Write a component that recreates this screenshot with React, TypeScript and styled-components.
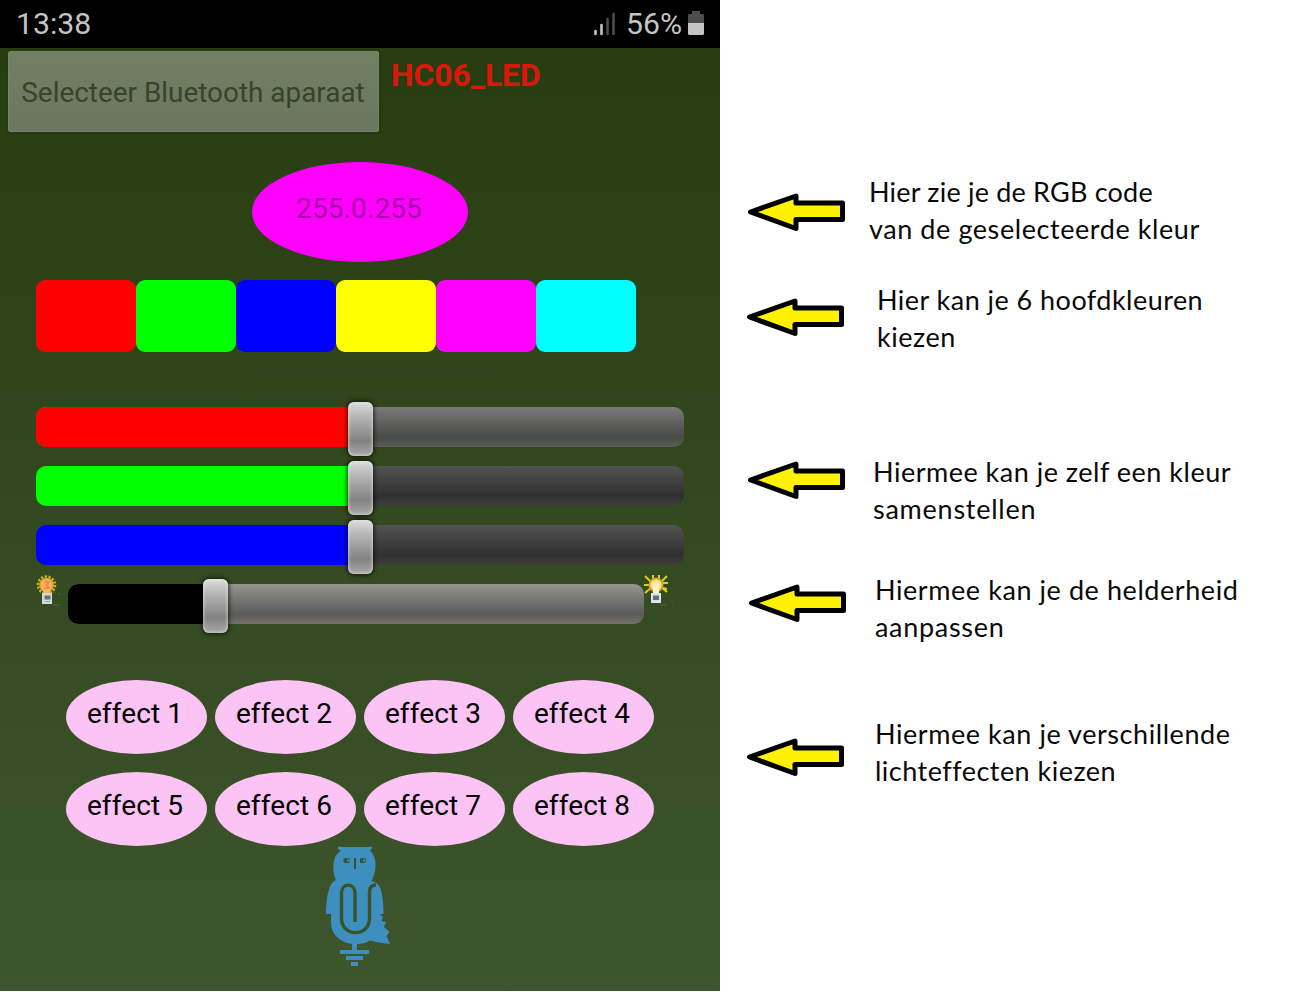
import React from "react";
import styled, { createGlobalStyle } from "styled-components";

const GlobalStyle = createGlobalStyle`
  * { box-sizing: border-box; }
  body { margin: 0; background: #fff; }
`;

const Page = styled.div`
  display: flex;
  width: 1290px;
  height: 992px;
  overflow: hidden;
  background: #fff;
`;

const Phone = styled.main`
  display: flex;
  flex-direction: column;
  width: 720px;
  height: 991px;
  background: linear-gradient(#283c11 48px, #3e562d 991px);
  font-family: Roboto, sans-serif;
  font-size: 28px;
`;

const StatusBar = styled.div`
  display: flex;
  align-items: center;
  height: 48px;
  padding: 0 16px;
  background: #000;
  color: #c4c4c4;
  font-size: 30.2px;
  line-height: 48px;
`;

const Clock = styled.span`
  flex: 1;
`;

const Signal = styled.svg`
  width: 24px;
  height: 24px;
  margin-right: 10px;
`;

const Battery = styled.svg`
  width: 16px;
  height: 24px;
  margin: -2px 0 0 6px;
`;

const Header = styled.div`
  display: flex;
  align-items: flex-start;
  height: 84px;
  padding: 3px 8px 0;
`;

const SelectButton = styled.button`
  width: 371px;
  height: 81px;
  padding: 2px 1px 0 0;
  border: 1px solid #76856a;
  border-radius: 2px;
  background: linear-gradient(#717f63, #69785d);
  box-shadow: 0 1px 2px rgba(20, 30, 10, 0.5);
  color: #37432b;
  font: 27.9px/78px Roboto, sans-serif;
  white-space: nowrap;
`;

const DeviceName = styled.strong`
  margin: 5px 0 0 12px;
  color: #d9180b;
  font-size: 31.8px;
  line-height: 38px;
`;

const ColorPreview = styled.div`
  width: 216px;
  height: 100px;
  margin: 30px 0 0 252px;
  padding: 30px 2px 0 0;
  border-radius: 50%;
  background: #f0f;
  color: #a500a5;
  line-height: 33px;
  text-align: center;
  letter-spacing: 0.1px;
`;

const Swatches = styled.div`
  display: flex;
  margin: 18px 0 0 36px;
`;

const Swatch = styled.button<{ $color: string }>`
  width: 100px;
  height: 72px;
  border: 0;
  border-radius: 9px;
  background: ${(p) => p.$color};
`;

const Sliders = styled.div`
  display: flex;
  flex-direction: column;
  gap: 19px;
  margin: 55px 36px 0;
`;

const tones = {
  light: "linear-gradient(#7a7a7a, #484a46 75%, #5a5c57)",
  dark: "linear-gradient(#525252, #303030 75%, #3d3f3b)",
  warm: "linear-gradient(#96958f, #5a5a58 75%, #73726b)",
};

const Track = styled.div<{ $tone: keyof typeof tones; $width: number }>`
  position: relative;
  width: ${(p) => p.$width}px;
  height: 40px;
  border-radius: 10px;
  background: ${(p) => tones[p.$tone]};
`;

const Fill = styled.div<{ $color: string }>`
  height: 40px;
  border-radius: 10px 0 0 10px;
  background: ${(p) => p.$color};
`;

const Thumb = styled.div`
  position: absolute;
  top: -5px;
  width: 25px;
  height: 54px;
  margin-left: -12px;
  border-radius: 6px;
  background: linear-gradient(#dedede, #b8b8b8 25%, #828282 72%, #a8a8a8);
  box-shadow: inset 0 0 3px 1px rgba(230, 230, 230, 0.6), 0 0 4px 1px rgba(0, 0, 0, 0.7);
`;

const BrightnessRow = styled.div`
  display: flex;
  align-items: flex-start;
  height: 40px;
`;

const Bulb = styled.svg`
  width: 32px;
  height: 32px;
  margin-top: -10px;
`;

const Effects = styled.div`
  display: grid;
  grid-template-columns: repeat(4, 141px);
  gap: 18px 8px;
  margin: 56px 0 0 66px;
`;

const Effect = styled.button`
  height: 74px;
  padding: 0 3px 8px 0;
  border: 0;
  border-radius: 50%;
  background: #fcc3f5;
  color: #000;
  font: 28px/33px Roboto, sans-serif;
  letter-spacing: 0.1px;
  white-space: nowrap;
`;

const Owl = styled.svg`
  width: 68px;
  height: 122px;
  margin: 0 0 0 324px;
`;

const Notes = styled.aside`
  display: flex;
  flex-direction: column;
  width: 570px;
  padding-top: 173px;
`;

const Note = styled.section<{ $indent: number; $after: number }>`
  display: flex;
  align-items: flex-start;
  height: 74px;
  margin-bottom: ${(p) => p.$after}px;
  padding-left: ${(p) => p.$indent}px;
`;

const Arrow = styled.svg<{ $top: number }>`
  flex: none;
  width: 98px;
  height: 40px;
  margin-top: ${(p) => p.$top}px;
`;

const NoteText = styled.p<{ $gap: number }>`
  margin: 0 0 0 ${(p) => p.$gap}px;
  color: #0a0a0a;
  font-family: Lato, sans-serif;
  font-size: 27px;
  line-height: 37px;
  white-space: nowrap;
`;

const Line = styled.span<{ $tracking: number }>`
  display: block;
  letter-spacing: ${(p) => p.$tracking}px;
`;

const colors = ["#f00", "#0f0", "#00f", "#ff0", "#f0f", "#0ff"];

const channels: { color: string; tone: keyof typeof tones }[] = [
  { color: "#f00", tone: "light" },
  { color: "#0f0", tone: "dark" },
  { color: "#00f", tone: "dark" },
];

const notes = [
  { indent: 28, top: 19, gap: 23, after: 34, lines: [["Hier zie je de RGB code", 0.2], ["van de geselecteerde kleur", 0.58]] },
  { indent: 27, top: 16, gap: 32, after: 98, lines: [["Hier kan je 6 hoofdkleuren", 0.46], ["kiezen", 0.5]] },
  { indent: 28, top: 7, gap: 27, after: 44, lines: [["Hiermee kan je zelf een kleur", 0.5], ["samenstellen", 0.75]] },
  { indent: 29, top: 12, gap: 28, after: 70, lines: [["Hiermee kan je de helderheid", 0.57], ["aanpassen", 0.7]] },
  { indent: 27, top: 22, gap: 30, after: 0, lines: [["Hiermee kan je verschillende", 0.56], ["lichteffecten kiezen", 0.48]] },
] as const;

function Slider({ color, tone, width, value }: { color: string; tone: keyof typeof tones; width: number; value: number }) {
  return (
    <Track $tone={tone} $width={width}>
      <Fill $color={color} style={{ width: value }} />
      <Thumb style={{ left: value }} />
    </Track>
  );
}

function DimBulb() {
  return (
    <Bulb viewBox="0 0 32 32">
      <circle cx="10.500" cy="11" r="8.500" fill="none" stroke="#cdb21c" strokeWidth="2.600" strokeDasharray="2.200 1.600" />
      <circle cx="10.500" cy="11" r="7.300" fill="#dba529" />
      <circle cx="10.500" cy="11" r="5.800" fill="#f9b060" />
      <path d="M8 8h5l-2.500 3 2.500 3H8" fill="none" stroke="#ee8a42" strokeWidth="1.600" />
      <path d="M7 15h7v5H7z" fill="#f7b267" />
      <rect x="6" y="19" width="10" height="11" fill="#d3dad6" />
      <path d="M8.500 21.500h6v4h-6z" fill="#67747b" />
      <path d="M9 27.500h5" stroke="#9aa5aa" />
      <path d="M18 19h2M22 20h2M17 31h7" stroke="#466c2f" />
    </Bulb>
  );
}

function BrightBulb() {
  return (
    <Bulb viewBox="0 0 32 32">
      <path d="M9 1v5M15 1v5M1 2l7 7M23 2l-7 7M0 11h6M18 9h6M1 19l7-6M23 18l-6-5M19 14l4 1" stroke="#d8cf20" strokeWidth="2" />
      <circle cx="12" cy="11" r="7.500" fill="#d79d22" />
      <circle cx="12" cy="11" r="5.800" fill="#ffe08a" />
      <path d="M9 9h6v10H9z" fill="#fff3c4" />
      <rect x="7" y="19" width="10" height="10" fill="#dce5e5" />
      <path d="M9 21.500h6v4.500H9z" fill="#5d7180" />
      <path d="M16 31h7M27 28h2" stroke="#456640" />
    </Bulb>
  );
}

export default function App() {
  return (
    <Page>
      <GlobalStyle />
      <Phone>
        <StatusBar>
          <Clock>13:38</Clock>
          <Signal viewBox="0 0 24 24">
            <path d="M3.500 19v3M9.500 13v9" stroke="#c4c4c4" strokeWidth="2.600" strokeLinecap="round" />
            <path d="M15.500 7v15M21.500 2v20" stroke="#4d4d4d" strokeWidth="2.600" strokeLinecap="round" />
          </Signal>
          <span>56%</span>
          <Battery viewBox="0 0 16 24">
            <path d="M4 0h8v3h3l1 1v8H0V4l1-1h3z" fill="#4d4d4d" />
            <path d="M0 12h16v11l-1 1H1l-1-1z" fill="#c4c4c4" />
          </Battery>
        </StatusBar>
        <Header>
          <SelectButton>Selecteer Bluetooth aparaat</SelectButton>
          <DeviceName>HC06_LED</DeviceName>
        </Header>
        <ColorPreview>255.0.255</ColorPreview>
        <Swatches>
          {colors.map((c) => (
            <Swatch key={c} $color={c} />
          ))}
        </Swatches>
        <Sliders>
          {channels.map((c) => (
            <Slider key={c.color} color={c.color} tone={c.tone} width={648} value={324} />
          ))}
          <BrightnessRow>
            <DimBulb />
            <Slider color="#000" tone="warm" width={576} value={147} />
            <BrightBulb />
          </BrightnessRow>
        </Sliders>
        <Effects>
          {[1, 2, 3, 4, 5, 6, 7, 8].map((n) => (
            <Effect key={n}>effect {n}</Effect>
          ))}
        </Effects>
        <Owl viewBox="14 11 68 122">
          <path
            d="M28 11.500L32 12H58L62 11.500V13L60 15.500C64 19 66 25 65.500 32C65 38 63.500 42 61.500 46C67 47.500 70.500 51 71.500 57C73 64 73.500 71 73.500 79H69.500L73 82L71.500 86L76 87L74 92L79.500 97L76.500 101L80 109C72 108 65 107 60 105.500C56 108 52 109 47 109V115H59V119H30V115H42V109C29 107 21 99 21 87V79H16C16 70 17 60 19.500 53C21 49 23 46 26 45C24 41 23 36 23.500 30C23.500 24 26 19 31 15.500L28 14ZM36 121H53V125H36ZM41 127H48V131H41Z"
            fill="#3d8fc0"
          />
          <path d="M45 87V58C45 47.500 31.500 47.500 31.500 58V83C31.500 102.500 59.500 102.500 59.500 83V57C59.500 52 62 50 66 50" fill="none" stroke="#3a5227" strokeWidth="3.400" />
          <path d="M39.500 23.500C35 22 32.500 24 33.500 26.500C34.500 28.500 37 28 39.500 28ZM50 23.500C54.500 22 57 24 56 26.500C55 28.500 52.500 28 50 28Z" fill="#3a5227" />
          <circle cx="38" cy="25.500" r="1.300" fill="#3d8fc0" />
          <circle cx="54" cy="25.500" r="1.300" fill="#3d8fc0" />
          <path d="M45 23V34" stroke="#3a5227" strokeWidth="2" />
        </Owl>
      </Phone>
      <Notes>
        {notes.map((n, i) => (
          <Note key={i} $indent={n.indent} $after={n.after}>
            <Arrow $top={n.top} viewBox="0 0 98 40">
              <path d="M2.500 20L48 4V11H94.500V27.500H48V36.500Z" fill="#fff200" stroke="#000" strokeWidth="5" strokeLinejoin="round" />
            </Arrow>
            <NoteText $gap={n.gap}>
              {n.lines.map(([text, tracking]) => (
                <Line key={text} $tracking={tracking}>{text}</Line>
              ))}
            </NoteText>
          </Note>
        ))}
      </Notes>
    </Page>
  );
}
